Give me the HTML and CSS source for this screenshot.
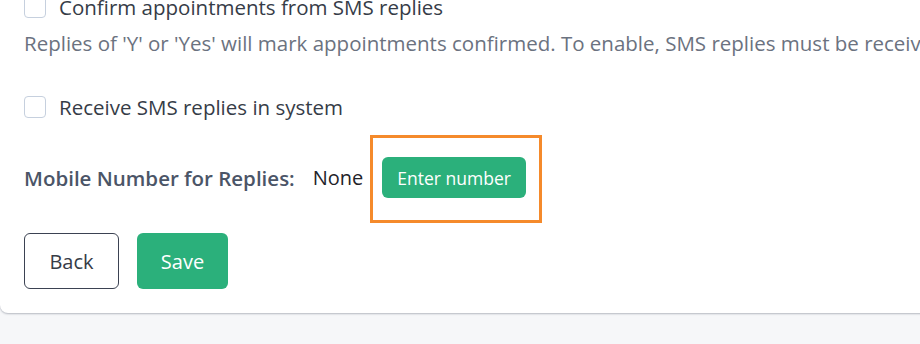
FILE: index.html
```html
<!DOCTYPE html>
<html lang="en">
<head>
    <meta charset="UTF-8">
    <meta name="viewport" content="width=device-width, initial-scale=1.0">
    <title>SMS settings</title>
    <link rel="stylesheet" href="styles.css">
</head>
<body>
    <div class="card">
        <label class="check-row">
            <span class="box"></span>
            <span>Confirm appointments from SMS replies</span>
        </label>
        <p class="help">Replies of 'Y' or 'Yes' will mark appointments confirmed. To enable, SMS replies must be received in system.</p>

        <label class="check-row second">
            <span class="box"></span>
            <span>Receive SMS replies in system</span>
        </label>

        <div class="mobile-row">
            <span class="mobile-label">Mobile Number for Replies:</span>
            <span class="mobile-value">None</span>
            <span class="btn-wrap">
                <button class="btn-small">Enter number</button>
                <!-- 주황색 하이라이트 박스 -->
                <span class="highlight"></span>
            </span>
        </div>

        <div class="actions">
            <button class="btn btn-outline">Back</button>
            <button class="btn btn-green">Save</button>
        </div>
    </div>
</body>
</html>
```

FILE: styles.css
```css
* { margin: 0; padding: 0; box-sizing: border-box; }
body, html {
    width: 100%;
    height: 100%;
    overflow: hidden;
    background: #f6f7f9;
    font-family: "Open Sans", "Noto Sans", sans-serif;
}
.card {
    width: 960px;
    margin-top: -4px;
    padding: 0 24px 24px;
    background: #fff;
    border-radius: 0 0 8px 8px;
    box-shadow: 0 1px 2px rgba(60, 70, 90, 0.35);
}
.check-row {
    display: flex;
    align-items: center;
    gap: 13px;
    height: 22px;
    font-size: 20.5px;
    color: #363c47;
}
.check-row.second {
    margin-top: 41px;
}
.box {
    flex: none;
    width: 22px;
    height: 22px;
    border: 1px solid #c6d0de;
    border-radius: 4px;
    background: #fff;
}
.help {
    margin-top: 13px;
    font-size: 20.5px;
    line-height: 24px;
    color: #6b7280;
    white-space: nowrap;
}
.mobile-row {
    display: flex;
    align-items: center;
    margin-top: 39px;
    height: 41px;
}
.mobile-label {
    font-size: 20.5px;
    font-weight: 600;
    color: #4b5567;
}
.mobile-value {
    margin-left: 18px;
    font-size: 20px;
    color: #1f2329;
}
.btn-wrap {
    position: relative;
    margin-left: 19px;
    display: flex;
}
.btn-small {
    height: 41px;
    padding: 0 15px;
    border: none;
    border-radius: 6px;
    background: #2bb07b;
    color: #fff;
    font-family: inherit;
    font-size: 17.5px;
}
.highlight {
    position: absolute;
    top: -22px;
    bottom: -25px;
    left: -12px;
    right: -16px;
    border: 3px solid #f58a2b;
}
.actions {
    display: flex;
    gap: 18px;
    margin-top: 35px;
}
.btn {
    height: 56px;
    border-radius: 6px;
    font-family: inherit;
    font-size: 20px;
}
.btn-outline {
    width: 95px;
    background: #fff;
    border: 1.5px solid #3b4252;
    color: #363c47;
}
.btn-green {
    width: 91px;
    background: #2bb07b;
    border: none;
    color: #fff;
}
```
